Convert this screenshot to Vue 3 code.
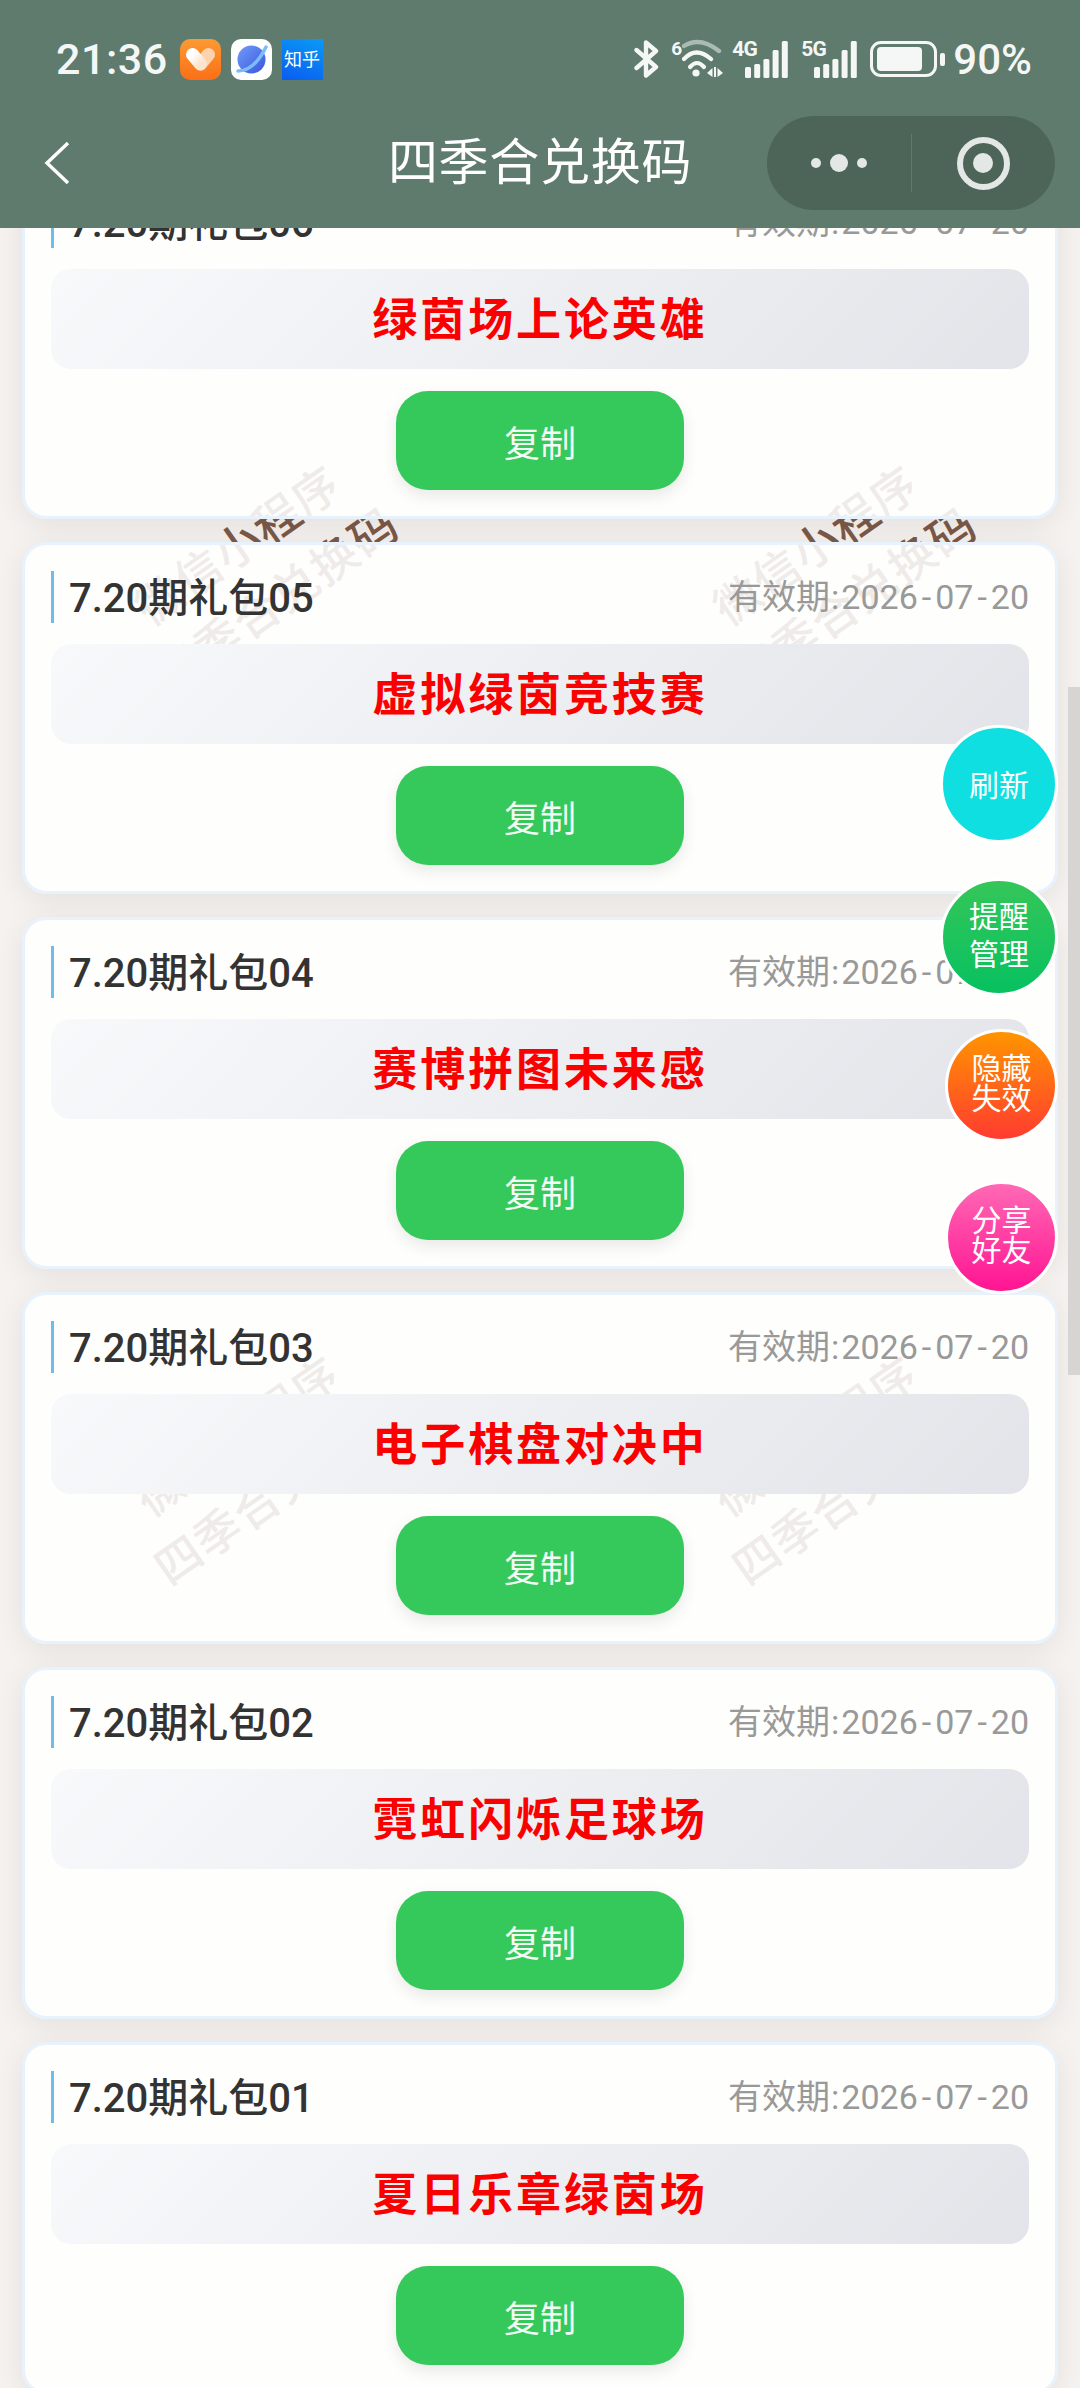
<template>
  <div class="page">
    <header class="topbar">
      <div class="statusbar">
        <div class="status-left">
          <span class="clock">21:36</span>
          <svg class="app-icon" viewBox="0 0 41 41">
            <defs>
              <linearGradient id="orangeBg" x1="0" y1="0" x2="0" y2="1">
                <stop offset="0" stop-color="#fb9a33" />
                <stop offset="1" stop-color="#fb6f17" />
              </linearGradient>
              <linearGradient id="heartLeft" x1="0" y1="0" x2="1" y2="1">
                <stop offset="0" stop-color="#ffffff" />
                <stop offset="1" stop-color="#fde3cc" />
              </linearGradient>
            </defs>
            <rect width="41" height="41" rx="10" fill="url(#orangeBg)" />
            <path d="M28.5 15.5 L20.5 25" fill="none" stroke="#fbd3ae" stroke-width="13" stroke-linecap="round" />
            <path d="M12.5 15.5 L20.5 25" fill="none" stroke="url(#heartLeft)" stroke-width="13" stroke-linecap="round" />
          </svg>
          <svg class="app-icon" viewBox="0 0 41 41">
            <defs>
              <linearGradient id="planetBg" x1="0" y1="0" x2="1" y2="1">
                <stop offset="0" stop-color="#6f9cf8" />
                <stop offset="1" stop-color="#3a55dd" />
              </linearGradient>
            </defs>
            <rect width="41" height="41" rx="10" fill="#fff" />
            <circle cx="20.5" cy="20.5" r="14" fill="url(#planetBg)" />
            <path d="M7 32 Q23 32 35 8" fill="none" stroke="#7dbcfb" stroke-width="3.5" stroke-linecap="round" />
          </svg>
          <span class="zhihu">知乎</span>
        </div>
        <div class="status-right">
          <svg class="bt" viewBox="0 0 25 38">
            <path d="M2.5 10 L22 27 L12 35.5 V2.5 L22 11 L2.5 28" fill="none" stroke="#f4f7f5" stroke-width="4.4" stroke-linecap="round" stroke-linejoin="round" />
          </svg>
          <span class="wifi-six">6</span>
          <svg class="wifi" viewBox="0 0 41 40">
            <path d="M2 7 Q18 -3 37 12" fill="none" stroke="#a9bbb2" stroke-width="4.4" stroke-linecap="round" />
            <path d="M2 20 Q14 7 29 20" fill="none" stroke="#f4f7f5" stroke-width="4.2" stroke-linecap="round" />
            <path d="M8 28 Q15 20 22 28" fill="none" stroke="#f4f7f5" stroke-width="4.2" stroke-linecap="round" />
            <circle cx="14" cy="34" r="3.6" fill="#f4f7f5" />
            <path d="M25 34 L30.5 29 V38 Z M32 28 H34 V38 H32 Z M35.5 29 L41 34 L35.5 38 Z" fill="#f4f7f5" />
          </svg>
          <div v-for="net in ['4G', '5G']" :key="net" class="signal">
            <span class="net">{{ net }}</span>
            <svg class="bars" viewBox="0 0 43 37">
              <rect x="0" y="26" width="6" height="11" rx="1.5" />
              <rect x="9.2" y="23" width="6" height="14" rx="1.5" />
              <rect x="18.4" y="18" width="6" height="19" rx="1.5" />
              <rect x="27.6" y="9" width="6" height="28" rx="1.5" />
              <rect x="36.8" y="0" width="6" height="37" rx="1.5" />
            </svg>
          </div>
          <div class="battery">
            <div class="battery-body"><div class="battery-level"></div></div>
            <div class="battery-tip"></div>
          </div>
          <span class="percent">90%</span>
        </div>
      </div>
      <div class="navbar">
        <svg class="back" viewBox="0 0 26 44">
          <path d="M24 2 L3 22 L24 42" fill="none" stroke="#fff" stroke-width="3.4" />
        </svg>
        <span class="nav-title">四季合兑换码</span>
        <div class="capsule">
          <div class="capsule-side">
            <i class="dot"></i><i class="dot big"></i><i class="dot"></i>
          </div>
          <div class="capsule-line"></div>
          <div class="capsule-side">
            <div class="target"><i></i></div>
          </div>
        </div>
      </div>
    </header>

    <div class="watermarks">
      <div v-for="(m, i) in marks" :key="i" class="mark" :style="{ left: m.x + 'px', top: m.y + 'px' }">
        <div>微信小程序</div>
        <div>四季合兑换码</div>
      </div>
    </div>

    <div class="list">
      <div v-for="item in gifts" :key="item.name" class="card">
        <div class="card-head">
          <span class="card-name">{{ item.name }}</span>
          <span class="card-date">有效期<span class="colon">:</span>2026<span class="dash">-</span>07<span class="dash">-</span>20</span>
        </div>
        <div class="code">{{ item.code }}</div>
        <div class="copy-row">
          <button class="copy">复制</button>
        </div>
      </div>
    </div>

    <div class="scroll-thumb"></div>

    <div class="float-btns">
      <div class="fab cyan">刷新</div>
      <div class="fab green">提醒<br />管理</div>
      <div class="fab orange">隐藏<br />失效</div>
      <div class="fab pink">分享<br />好友</div>
    </div>
  </div>
</template>

<script setup>
const gifts = [
  { name: '7.20期礼包06', code: '绿茵场上论英雄' },
  { name: '7.20期礼包05', code: '虚拟绿茵竞技赛' },
  { name: '7.20期礼包04', code: '赛博拼图未来感' },
  { name: '7.20期礼包03', code: '电子棋盘对决中' },
  { name: '7.20期礼包02', code: '霓虹闪烁足球场' },
  { name: '7.20期礼包01', code: '夏日乐章绿茵场' }
]

const marks = [
  { x: 58, y: 507 },
  { x: 636, y: 507 },
  { x: 58, y: 1398 },
  { x: 636, y: 1398 }
]
</script>

<style>
html, body {
  margin: 0;
  background: #f6f2ef;
}
</style>

<style scoped>
.page {
  position: relative;
  width: 1080px;
  height: 2388px;
  overflow: hidden;
  background: #f6f2ef;
  font-family: Roboto, "Noto Sans CJK SC", sans-serif;
}

.topbar {
  position: relative;
  z-index: 5;
  height: 228px;
  background: #5e7b6d;
  color: #fff;
}

.statusbar {
  display: flex;
  justify-content: space-between;
  align-items: center;
  height: 118px;
  padding: 0 48px 0 56px;
  color: #f4f7f5;
}

.status-left, .status-right {
  display: flex;
  align-items: center;
}

.clock {
  font-size: 43px;
  font-weight: 500;
  letter-spacing: 0.5px;
  margin-right: 12px;
}

.app-icon {
  width: 41px;
  height: 41px;
  margin-right: 10px;
}

.zhihu {
  width: 41px;
  height: 41px;
  line-height: 41px;
  text-align: center;
  font-size: 18px;
  white-space: nowrap;
  color: #fff;
  background: linear-gradient(200deg, #0a9af5, #0a5cf0);
}

.bt {
  width: 25px;
  height: 38px;
  margin-right: 12px;
}

.wifi-six {
  width: 11px;
  align-self: flex-start;
  margin-top: 3px;
  font-size: 19px;
  line-height: 22px;
  font-weight: 700;
}

.wifi {
  width: 41px;
  height: 40px;
  margin-right: 9px;
}

.signal {
  position: relative;
  display: flex;
  align-items: flex-end;
  justify-content: flex-end;
  width: 56px;
  height: 37px;
  margin-right: 13px;
}

.bars {
  width: 43px;
  height: 37px;
  fill: #f4f7f5;
}

.net {
  position: absolute;
  left: 0;
  top: -4px;
  font-size: 21px;
  line-height: 24px;
  font-weight: 700;
  letter-spacing: -1px;
}

.battery {
  display: flex;
  align-items: center;
  margin-right: 8px;
}

.battery-body {
  box-sizing: border-box;
  width: 67px;
  height: 36px;
  border: 3px solid #f4f7f5;
  border-radius: 11px;
  padding: 3px 4px;
}

.battery-level {
  width: 45px;
  height: 100%;
  background: #f4f7f5;
  border-radius: 4px;
}

.battery-tip {
  width: 5px;
  height: 13px;
  margin-left: 3px;
  border-radius: 2px;
  background: #f4f7f5;
}

.percent {
  font-size: 42px;
  font-weight: 500;
}

.navbar {
  position: relative;
  display: flex;
  align-items: center;
  justify-content: space-between;
  height: 90px;
  padding: 0 25px 20px 44px;
}

.back {
  width: 26px;
  height: 44px;
}

.nav-title {
  position: absolute;
  left: 0;
  right: 0;
  top: 10px;
  text-align: center;
  font-size: 50px;
  line-height: 70px;
  letter-spacing: 0.7px;
}

.capsule {
  display: flex;
  align-items: center;
  width: 288px;
  height: 94px;
  border-radius: 47px;
  background: #4d6559;
}

.capsule-side {
  flex: 1;
  display: flex;
  align-items: center;
  justify-content: center;
  gap: 9px;
}

.capsule-line {
  width: 1px;
  height: 58px;
  background: #5e7b6d;
}

.dot {
  width: 10px;
  height: 10px;
  border-radius: 50%;
  background: #e3e7e5;
}

.dot.big {
  width: 18px;
  height: 18px;
}

.target {
  box-sizing: border-box;
  display: flex;
  align-items: center;
  justify-content: center;
  width: 53px;
  height: 53px;
  border: 6px solid #e3e7e5;
  border-radius: 50%;
}

.target i {
  width: 20px;
  height: 20px;
  border-radius: 50%;
  background: #e3e7e5;
}

.watermarks {
  position: absolute;
  inset: 0;
}

.mark {
  position: absolute;
  width: 400px;
  text-align: center;
  font-size: 46px;
  line-height: 67px;
  font-weight: 500;
  letter-spacing: 1.5px;
  color: #7d5a49;
  white-space: nowrap;
  transform: rotate(-35deg);
}

.list {
  position: relative;
  display: flex;
  flex-direction: column;
  gap: 23px;
  margin-top: -61px;
  padding: 0 22px;
}

.card {
  box-sizing: border-box;
  height: 352px;
  padding: 26px 26px 0;
  border: 3px solid #e8f2fd;
  border-radius: 24px;
  background: rgba(255, 255, 255, 0.88);
  box-shadow: 0 6px 30px rgba(0, 0, 0, 0.08);
}

.card-head {
  box-sizing: border-box;
  display: flex;
  align-items: center;
  justify-content: space-between;
  height: 52px;
  padding: 0 0 5px 15px;
  border-left: 3px solid #6cbcec;
}

.card-name {
  font-size: 40px;
  font-weight: 500;
  color: #333;
}

.card-date {
  font-size: 34px;
  color: #999;
}

.colon {
  margin: 0 2px 0 1px;
}

.dash {
  margin: 0 4px;
}

.code {
  height: 100px;
  margin-top: 21px;
  border-radius: 20px;
  background: linear-gradient(135deg, #f8f9fb, #e2e4e9);
  text-align: center;
  font-size: 45px;
  line-height: 104px;
  font-weight: 700;
  letter-spacing: 2.9px;
  color: #fb0000;
}

.copy-row {
  display: flex;
  justify-content: center;
  margin-top: 22px;
}

.copy {
  width: 288px;
  height: 99px;
  border: none;
  border-radius: 32px;
  background: #35c95b;
  box-shadow: 0 6px 16px rgba(0, 0, 0, 0.09);
  color: #f2fbf4;
  font-family: inherit;
  font-size: 36px;
}

.scroll-thumb {
  position: absolute;
  right: 0;
  top: 687px;
  width: 12px;
  height: 688px;
  background: #d6d5d3;
}

.float-btns {
  position: absolute;
  right: 22px;
  top: 725px;
  display: flex;
  flex-direction: column;
  align-items: flex-end;
}

.fab {
  box-sizing: border-box;
  display: flex;
  align-items: center;
  justify-content: center;
  text-align: center;
  width: 118px;
  height: 118px;
  padding-bottom: 3px;
  border: 3px solid #fff;
  border-radius: 50%;
  color: #fff;
  font-size: 30px;
}

.cyan { background: #0fdfe0; }
.green { margin-top: 35px; background: linear-gradient(180deg, #35c659, #07c160); line-height: 38px; }
.orange { width: 113px; height: 113px; margin-top: 33px; background: linear-gradient(180deg, #ff9500, #ff3b30); line-height: 30px; }
.pink { width: 113px; height: 113px; margin-top: 39px; background: linear-gradient(180deg, #ff69b4, #ff1493); line-height: 30px; }
</style>
